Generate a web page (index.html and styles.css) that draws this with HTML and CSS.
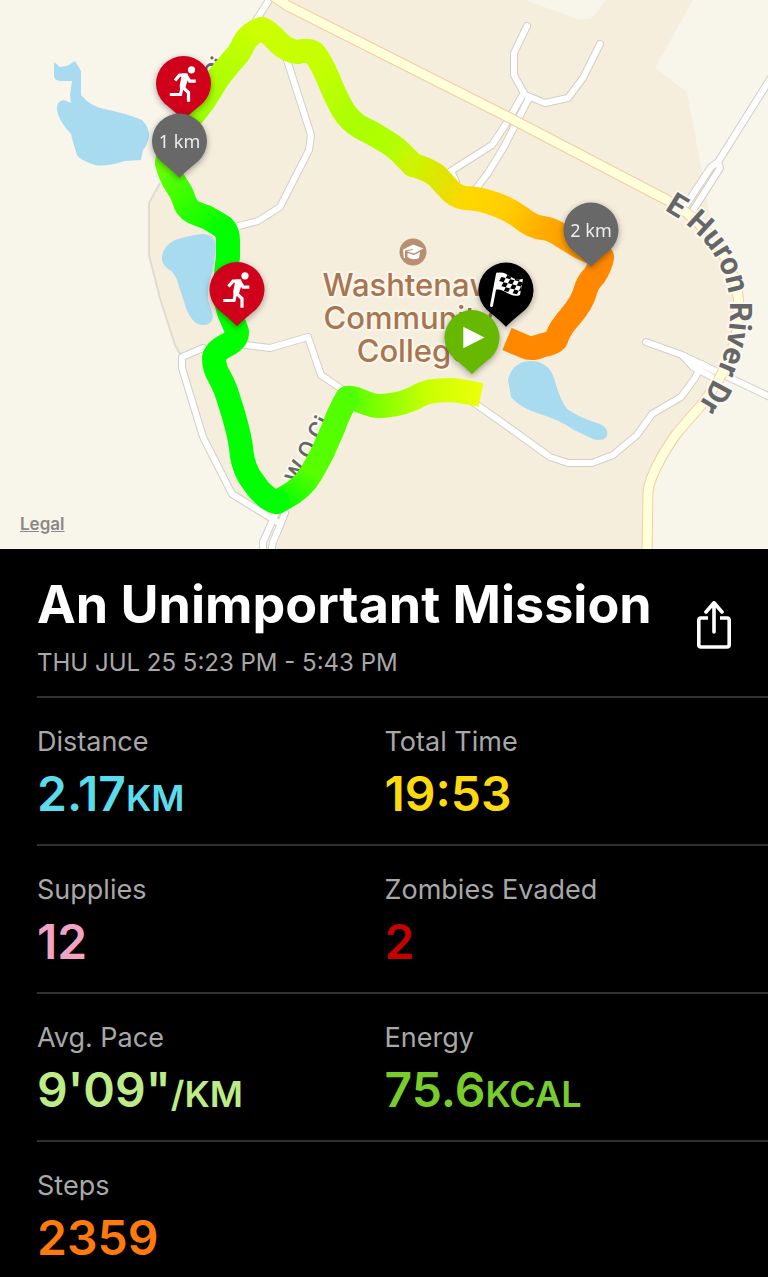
FILE: index.html
```html
<!DOCTYPE html>
<html lang="en">
<head>
  <meta charset="UTF-8">
  <meta name="viewport" content="width=device-width, initial-scale=1.0">
  <title>An Unimportant Mission</title>
  <link rel="stylesheet" href="styles.css">
</head>
<body>
  <div class="map">
    <svg class="map-canvas" viewBox="0 0 768 549" role="img" aria-label="Route map">
      <defs>
        <path id="pin" d="M0 37 Q-3 33 -19 20 A27.5 27.5 0 1 1 19 20 Q3 33 0 37Z"/>
        <g id="runner">
          <circle cx="8" cy="-13.7" r="3.6" fill="#fff"/>
          <path d="M-8.5 -3L-4 -8.3H2.5L6.2 -2.3H12.3M-1.5 4L-3 11H-13.7M-1 3.5L5 9V18.3" fill="none" stroke="#fff" stroke-width="3.2"/>
          <path d="M-1.5 -9.9L4 -9.9L5 -6L1.8 4.5L-3.5 5.5L-3.8 2Z" fill="#fff"/>
        </g>
        <clipPath id="cloth"><path d="M-8 -17C1 -20 5 -8 17 -11L14 5C4 9 -2 -3 -11 0Z"/></clipPath>
        <path id="huron" d="M664 210C702 231 728 263 730 306C731 336 725 363 698 406"/>
        <path id="circle-dr" d="M299 485L345 394"/>
        <path id="circle-dr-top" d="M217 82L242 36"/>

        <!-- pace colours along the route -->
        <linearGradient id="g1" gradientUnits="userSpaceOnUse" x1="480" y1="394" x2="347" y2="398">
          <stop offset="0" stop-color="#ecff0a"/><stop offset=".4" stop-color="#c8ff00"/><stop offset=".7" stop-color="#8cff00"/><stop offset="1" stop-color="#50ff00"/>
        </linearGradient>
        <linearGradient id="g2" gradientUnits="userSpaceOnUse" x1="347" y1="398" x2="277" y2="502">
          <stop offset="0" stop-color="#50ff00"/><stop offset=".65" stop-color="#58ff00"/><stop offset="1" stop-color="#00ff00"/>
        </linearGradient>
        <linearGradient id="g3" gradientUnits="userSpaceOnUse" x1="223" y1="227" x2="167" y2="163">
          <stop offset="0" stop-color="#00ff00"/><stop offset="1" stop-color="#66ff00"/>
        </linearGradient>
        <linearGradient id="g4" gradientUnits="userSpaceOnUse" x1="167" y1="163" x2="262" y2="29">
          <stop offset="0" stop-color="#66ff00"/><stop offset=".4" stop-color="#a0ff00"/><stop offset="1" stop-color="#ccff00"/>
        </linearGradient>
        <linearGradient id="g5" gradientUnits="userSpaceOnUse" x1="262" y1="29" x2="413" y2="165">
          <stop offset="0" stop-color="#ccff00"/><stop offset=".35" stop-color="#c4ff00"/><stop offset=".65" stop-color="#aaff00"/><stop offset=".85" stop-color="#b0ff00"/><stop offset="1" stop-color="#ccf400"/>
        </linearGradient>
        <linearGradient id="g6" gradientUnits="userSpaceOnUse" x1="413" y1="165" x2="602" y2="257">
          <stop offset="0" stop-color="#ccf400"/><stop offset=".18" stop-color="#e6e000"/><stop offset=".3" stop-color="#ffd800"/><stop offset=".5" stop-color="#ffcc00"/><stop offset=".7" stop-color="#ffaa00"/><stop offset="1" stop-color="#ff8800"/>
        </linearGradient>
      </defs>

      <!-- land -->
      <rect width="768" height="549" fill="#f8f5eb"/>
      <path fill="#f5eedd" d="M270 0L160 183L149 203V255L175 345L203 437L232 494L278 523L268 549H647L648 490L660 460L677 433L703 403L726 370L738 320L733 280L715 243L702 172L687 92L655 68L693 0H606L592 18L580 20L525 0Z"/>
      <path class="boundary" d="M160 183L149 203V255L160 298L175 345L182 357"/>

      <!-- lakes -->
      <g fill="#a9dbf0">
        <path d="M54 62L60 67L67 66L75 61L81 71L81 95Q90 106 104 109Q125 113 142 120Q150 128 149 137Q147 146 143 150L141 160L125 161Q106 167 95 165Q80 160 77 155Q73 143 71 134Q58 120 57 110Q56 101 64 100L71 103L70 95L72 81L60 81Q54 80 54 76Z"/>
        <path d="M162 257Q163 246 175 240Q190 235 203 234Q214 234 216 245L213 270Q207 285 208 300Q213 313 213 318Q210 326 202 325Q192 324 186 308L177 280Q174 272 168 269Q161 263 162 257Z"/>
        <path d="M508 380Q512 362 530 361Q548 361 554 378Q560 400 567 409Q580 418 600 424Q609 428 607 436Q603 442 593 439L574 430Q560 420 540 414Q520 408 511 397Z"/>
      </g>

      <!-- roads: casing first, fill on top -->
      <g class="road casing">
        <path d="M271 -3L255 22"/>
        <path d="M287 60L311 135L309 150L280 207L258 221L235 227"/>
        <path d="M527 26L514 53V75L525 95L545 103L568 98L583 78L600 44"/>
        <path d="M522 96L508 121L492 145L451 171L456 182"/>
        <path d="M529 98L505 145L488 173L475 190"/>
        <path d="M772 76L718 162L711 167L684 208M718 162L720 168L692 212"/>
        <path d="M646 342L682 355L770 397M682 355L693 367L714 378M702 364L695 378L681 397L652 414L637 435L613 455L592 463H568L550 457L500 421L470 400"/>
        <path d="M245 345L270 348L308 337L321 375L343 390"/>
        <path d="M203 348L182 357V368L203 437L232 494L279 523"/>
        <path d="M276 513L263 542V552M285 513L279 528L273 542L271 552"/>
      </g>
      <g class="road">
        <path d="M271 -3L255 22"/>
        <path d="M287 60L311 135L309 150L280 207L258 221L235 227"/>
        <path d="M527 26L514 53V75L525 95L545 103L568 98L583 78L600 44"/>
        <path d="M522 96L508 121L492 145L451 171L456 182"/>
        <path d="M529 98L505 145L488 173L475 190"/>
        <path d="M772 76L718 162L711 167L684 208M718 162L720 168L692 212"/>
        <path d="M646 342L682 355L770 397M682 355L693 367L714 378M702 364L695 378L681 397L652 414L637 435L613 455L592 463H568L550 457L500 421L470 400"/>
        <path d="M245 345L270 348L308 337L321 375L343 390"/>
        <path d="M203 348L182 357V368L203 437L232 494L279 523"/>
        <path d="M276 513L263 542V552M285 513L279 528L273 542L271 552"/>
      </g>
      <path class="highway casing" d="M270 -6L288 6L508 117L667 200L687 213Q736 253 739 305Q740 355 703 403L677 433Q665 450 660 460Q649 480 648 492L647 555"/>
      <path class="highway" d="M270 -6L288 6L508 117L667 200L687 213Q736 253 739 305Q740 355 703 403L677 433Q665 450 660 460Q649 480 648 492L647 555"/>

      <!-- labels -->
      <text class="street"><textPath href="#huron">E Huron River Dr</textPath></text>
      <text class="street small"><textPath href="#circle-dr">W O Ci</textPath></text>
      <text class="street small"><textPath href="#circle-dr-top">Ci</textPath></text>
      <circle cx="413" cy="252" r="13.5" fill="#b98f70"/>
      <path fill="#fff" d="M403 249.500L413 244.500L423.500 248.500L414 253.500L407 251.500L413 249.500V248.800L405 250.800V258H403.800ZM407.500 253L414 255L420 252L419 258Q413 261 407.500 257Z"/>
      <text class="place" text-anchor="middle">
        <tspan x="413" y="296">Washtenaw</tspan>
        <tspan x="413" y="329">Community</tspan>
        <tspan x="413" y="362">College</tspan>
      </text>

      <!-- route -->
      <g class="route">
        <path class="cut" stroke="url(#g1)" d="M481 395Q462 391 452 390Q443 390 434 391Q426 392 420 395Q414 399 407 401Q400 404 390 405Q380 407 372 405Q365 403 356 399Q350 397 347 398"/>
        <path stroke="url(#g2)" d="M347 398Q341 409 337 418Q334 427 328 440Q323 453 317 463Q312 473 306 481Q300 488 294 492Q288 496 277 502"/>
        <path stroke="#00ff00" d="M277 502Q270 501 260 491Q255 485 249 476Q244 467 242 456Q241 445 239 436Q237 427 233 413Q229 400 226 391Q223 383 219 376Q214 368 214 358Q216 350 227 345Q237 340 237 332Q236 328 231 317Q226 307 225 290Q226 270 228 257V240Q228 232 223 227"/>
        <path stroke="url(#g3)" d="M223 227Q212 220 206 217Q200 215 193 212Q186 208 184 200Q182 193 177 186Q170 176 167 163"/>
        <path stroke="url(#g4)" d="M167 163Q168 150 180 133Q190 118 203 102Q211 90 218 78Q229 64 238 54Q241 50 244 43Q250 32 262 29"/>
        <path stroke="url(#g5)" d="M262 29Q269 32 279 43Q287 51 298 52Q308 49 314 53Q320 60 328 78Q335 96 343 110Q349 120 360 127Q373 133 387 142Q398 149 404 156L413 165"/>
        <path class="cut" stroke="#ff8800" d="M602 257Q601 266 594 276Q587 283 585 292Q582 303 570 317Q560 328 557 337Q556 343 543 345Q532 350 526 347L507 339"/>
        <path stroke="url(#g6)" d="M413 165Q428 169 437 176L447 187Q455 197 465 198Q480 198 500 206Q510 210 520 217Q532 227 543 228Q552 229 562 236L580 247L602 257"/>
      </g>

      <!-- pins -->
      <g class="pin" transform="translate(183.500 83.500)"><use href="#pin" fill="#d0021b"/><use href="#runner"/></g>
      <g class="pin" transform="translate(179.500 141)"><use href="#pin" fill="#686868"/><text class="km" y="7" text-anchor="middle">1 km</text></g>
      <g class="pin" transform="translate(237 289.500)"><use href="#pin" fill="#d0021b"/><use href="#runner"/></g>
      <g class="pin" transform="translate(591 230)"><use href="#pin" fill="#686868"/><text class="km" y="7" text-anchor="middle">2 km</text></g>
      <g class="pin" transform="translate(506 290)">
        <use href="#pin" fill="#000"/>
        <path d="M-8.500 -16L-14.500 15.500" stroke="#fff" stroke-width="3" stroke-linecap="round"/>
        <g clip-path="url(#cloth)">
          <rect x="-14" y="-22" width="34" height="32" fill="#fff"/>
          <g transform="rotate(14) skewX(-14)" fill="#000">
            <path d="M-6 -16h4.500v4.500h-4.500zM3 -16h4.500v4.500h-4.500zM12 -16h4.500v4.500h-4.500zM-10.500 -11.500h4.500v4.500h-4.500zM-1.500 -11.500h4.500v4.500h-4.500zM7.500 -11.500h4.500v4.500h-4.500zM-6 -7h4.500v4.500h-4.500zM3 -7h4.500v4.500h-4.500zM12 -7h4.500v4.500h-4.500zM-1.500 -2.500h4.500v4h-4.500zM7.500 -2.500h4.500v4h-4.500z"/>
          </g>
        </g>
      </g>
      <g class="pin" transform="translate(472 337.500)"><use href="#pin" fill="#66b800"/><path d="M-8.700 -10.700V10.700L12.500 0Z" fill="#fff"/></g>
    </svg>
    <a class="legal" href="#legal">Legal</a>
  </div>

  <header class="mission">
    <div class="mission-info">
      <h1>An Unimportant Mission</h1>
      <p class="date">THU JUL 25 5:23 PM - 5:43 PM</p>
    </div>
    <button class="share" type="button" aria-label="Share">
      <svg viewBox="0 0 36 50" width="36" height="50" fill="none" stroke="#fff" stroke-width="3.600" stroke-linejoin="round">
        <path d="M12 17H5Q2.800 17 2.800 19.500V43.500Q2.800 46 5 46H31Q33.200 46 33.200 43.500V19.500Q33.200 17 31 17H24"/>
        <path d="M18 31V2M10 11L18 1.800L26 11" stroke-linecap="round"/>
      </svg>
    </button>
  </header>

  <dl class="stats">
    <div class="stats-row">
      <div class="stat distance"><dt>Distance</dt><dd>2.17<span class="unit">KM</span></dd></div>
      <div class="stat time"><dt>Total Time</dt><dd>19:53</dd></div>
    </div>
    <div class="stats-row">
      <div class="stat supplies"><dt>Supplies</dt><dd>12</dd></div>
      <div class="stat zombies"><dt>Zombies Evaded</dt><dd>2</dd></div>
    </div>
    <div class="stats-row">
      <div class="stat pace"><dt>Avg. Pace</dt><dd>9'09"<span class="unit">/KM</span></dd></div>
      <div class="stat energy"><dt>Energy</dt><dd>75.6<span class="unit">KCAL</span></dd></div>
    </div>
    <div class="stats-row">
      <div class="stat steps"><dt>Steps</dt><dd>2359</dd></div>
    </div>
  </dl>
</body>
</html>
```

FILE: styles.css
```css
body {
  margin: 0;
  background: #000;
  color: #fff;
  font-family: Inter, "Liberation Sans", sans-serif;
}

.map {
  position: relative;
}

.map-canvas {
  display: block;
  width: 100%;
  height: auto;
}

.boundary {
  fill: none;
  stroke: #dfdccf;
  stroke-width: 2;
}

.road,
.highway {
  fill: none;
  stroke: #fff;
  stroke-width: 6;
  stroke-linecap: round;
  stroke-linejoin: round;
}

.road.casing {
  stroke: #d2cec8;
  stroke-width: 8;
}

.highway {
  stroke: #ffffda;
  stroke-width: 9;
}

.highway.casing {
  stroke: #f3cda0;
  stroke-width: 11;
}

.street {
  font-family: Roboto, sans-serif;
  font-size: 31px;
  font-weight: 700;
  fill: #666;
  stroke: #fbf8f0;
  stroke-width: 4;
  stroke-linejoin: round;
  paint-order: stroke;
}

.street.small {
  font-size: 24px;
  font-weight: 500;
}

.place {
  font-size: 31px;
  font-weight: 500;
  fill: #a77650;
  stroke: #fbf7ee;
  stroke-width: 4;
  stroke-linejoin: round;
  paint-order: stroke;
}

.route path {
  fill: none;
  stroke-width: 24;
  stroke-linecap: round;
  stroke-linejoin: round;
}

.route .cut {
  stroke-linecap: butt;
}

.pin {
  filter: drop-shadow(0 2px 3px rgba(0, 0, 0, 0.35));
}

.km {
  font-family: "Noto Sans", sans-serif;
  font-size: 18px;
  fill: #eee;
}

.legal {
  position: absolute;
  left: 20px;
  bottom: 15px;
  font-size: 17px;
  line-height: 20px;
  font-weight: 600;
  color: #888;
}

.mission {
  display: flex;
  justify-content: space-between;
  align-items: center;
  padding: 24px 36px 17px 37px;
}

h1 {
  margin: 0;
  font-size: 52px;
  line-height: 64px;
  font-weight: 700;
}

.date {
  margin: 10px 0 0;
  font-size: 24px;
  line-height: 32px;
  color: #a8a8a8;
}

.share {
  padding: 0;
  border: none;
  background: none;
  cursor: pointer;
}

.share svg {
  display: block;
}

.stats {
  margin: 0 0 0 37px;
}

.stats-row {
  display: grid;
  grid-template-columns: calc(50% - 18px) 1fr;
  border-top: 2px solid #303030;
  padding: 26px 0 22px;
}

.stats-row:last-child {
  padding-bottom: 5px;
}

dt {
  font-size: 27px;
  line-height: 36px;
  color: #a8a8a8;
}

dd {
  margin: 6px 0 0;
  font-size: 48px;
  line-height: 56px;
  font-weight: 600;
}

.unit {
  font-size: 36px;
  line-height: 36px;
  font-weight: 600;
}

.distance dd { color: #5bdcec; }
.time dd { color: #fbdb0c; }
.supplies dd { color: #f2a3c4; }
.zombies dd { color: #c40000; }
.pace dd { color: #bdeb88; }
.energy dd { color: #78cc2c; }
.steps dd { color: #ff7a0c; }
```
